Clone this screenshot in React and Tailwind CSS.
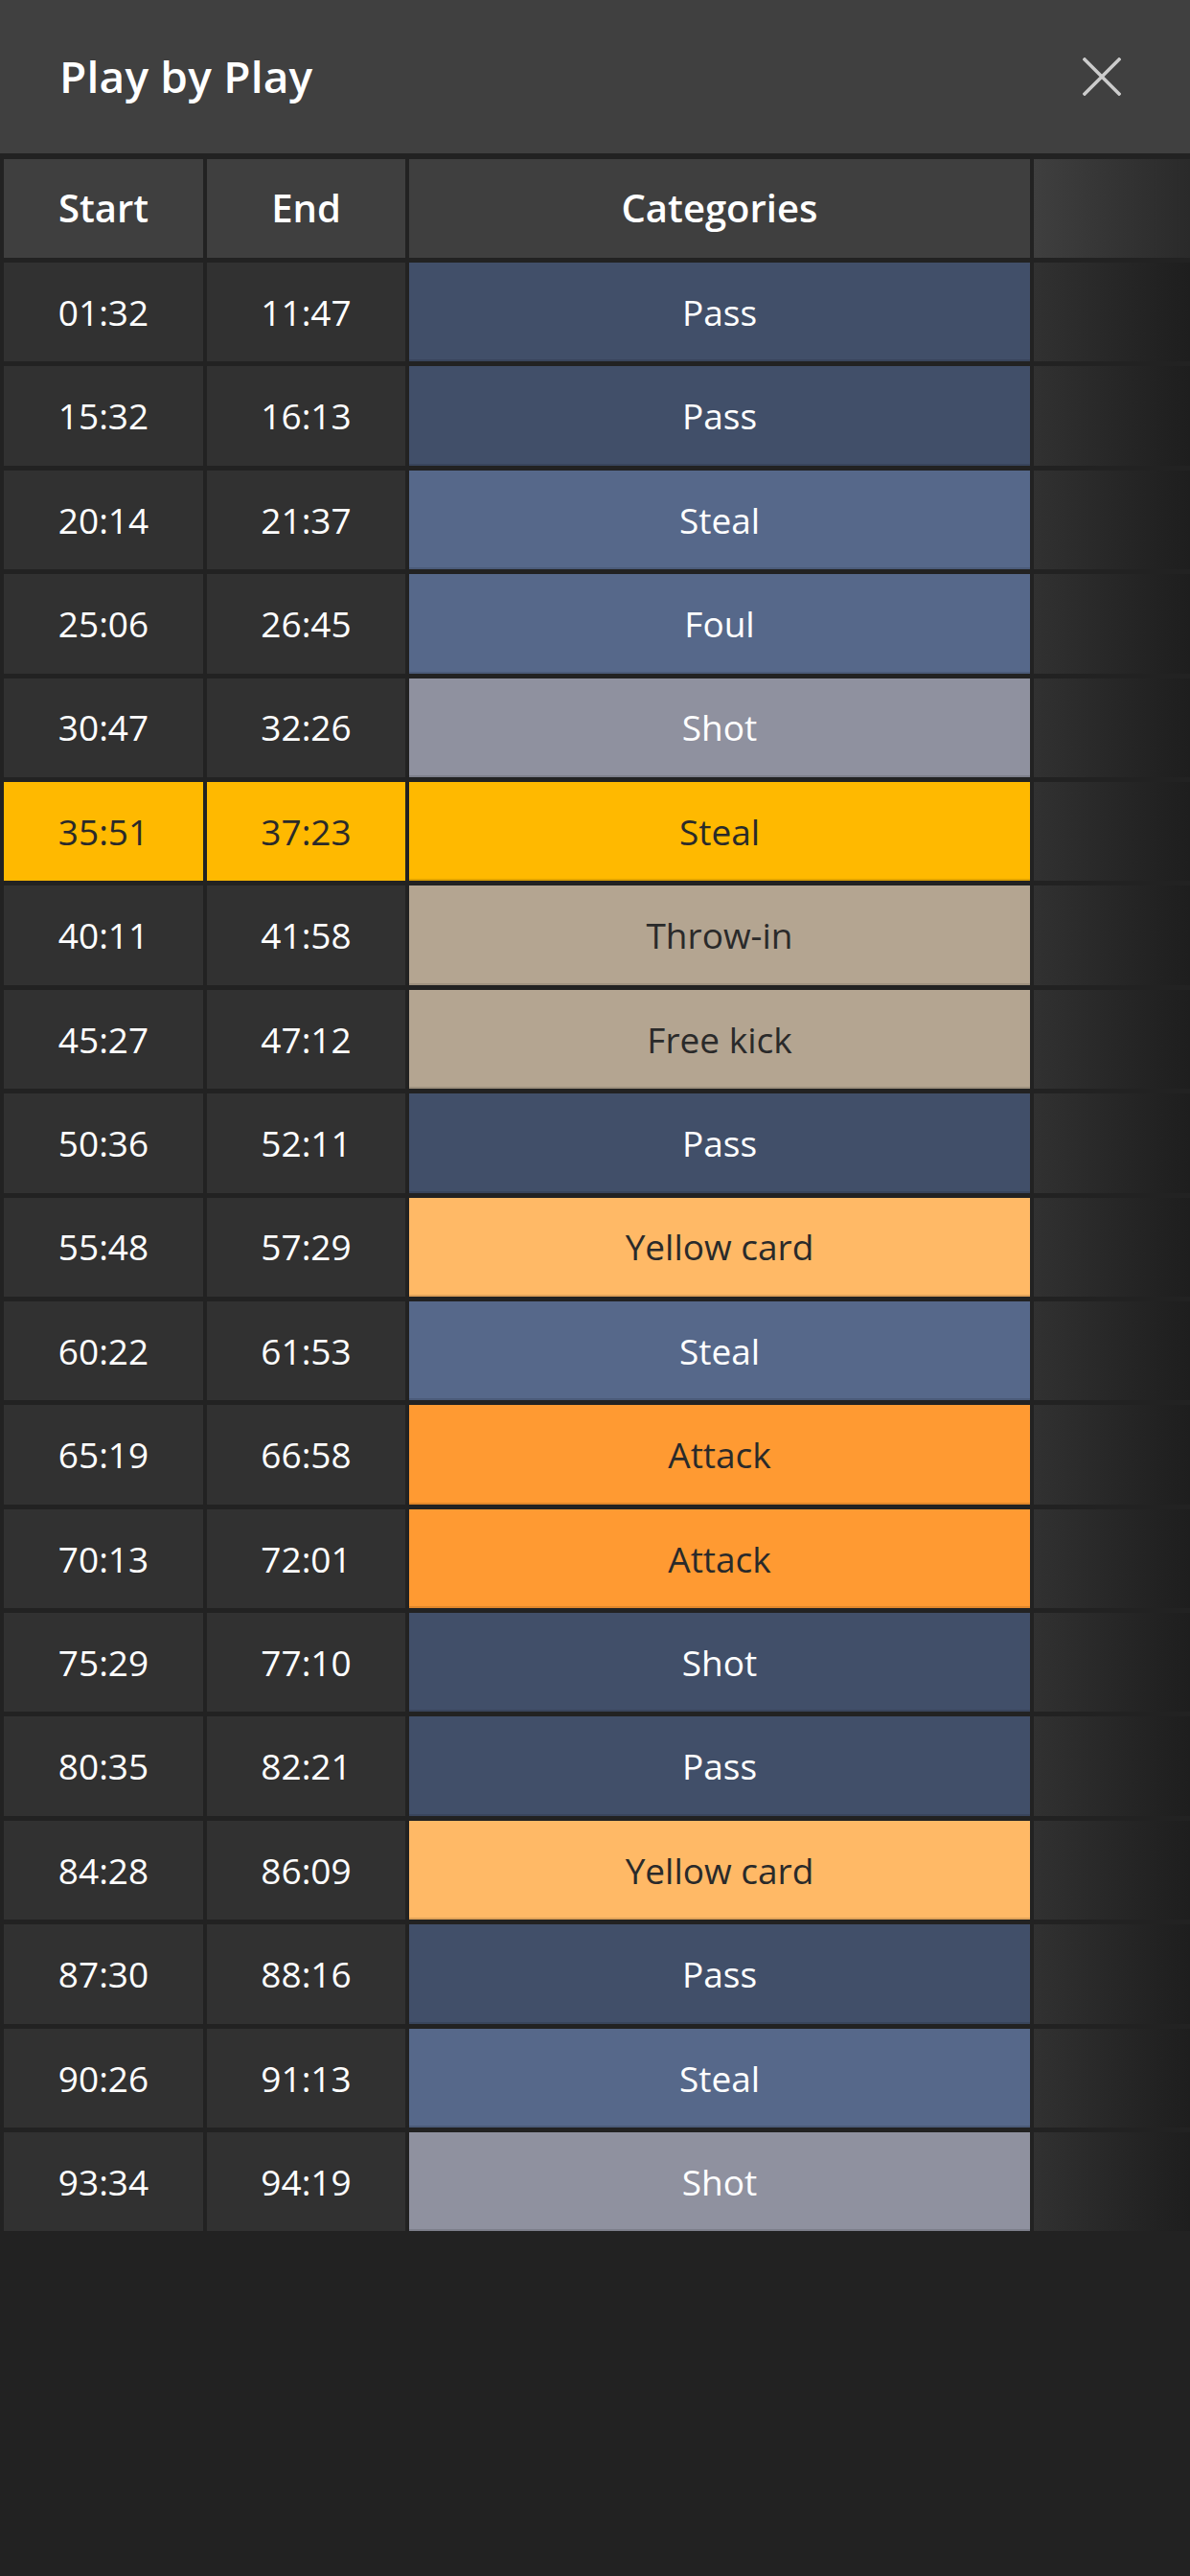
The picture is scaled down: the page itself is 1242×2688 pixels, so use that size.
import React from 'react';

// category colours
const CATS = {
    Pass: 'bg-[#414f69] text-white',
    Steal: 'bg-[#56688a] text-white',
    Foul: 'bg-[#56688a] text-white',
    Shot: 'bg-[#8f919f] text-white',
    'Throw-in': 'bg-[#b4a591] text-[#2a2a2a]',
    'Free kick': 'bg-[#b4a591] text-[#2a2a2a]',
    'Yellow card': 'bg-[#ffb966] text-[#2a2a2a]',
    Attack: 'bg-[#ff9a32] text-[#2a2a2a]',
};

const PLAYS = [
    { start: '01:32', end: '11:47', cat: 'Pass' },
    { start: '15:32', end: '16:13', cat: 'Pass' },
    { start: '20:14', end: '21:37', cat: 'Steal' },
    { start: '25:06', end: '26:45', cat: 'Foul' },
    { start: '30:47', end: '32:26', cat: 'Shot' },
    { start: '35:51', end: '37:23', cat: 'Steal', active: true },
    { start: '40:11', end: '41:58', cat: 'Throw-in' },
    { start: '45:27', end: '47:12', cat: 'Free kick' },
    { start: '50:36', end: '52:11', cat: 'Pass' },
    { start: '55:48', end: '57:29', cat: 'Yellow card' },
    { start: '60:22', end: '61:53', cat: 'Steal' },
    { start: '65:19', end: '66:58', cat: 'Attack' },
    { start: '70:13', end: '72:01', cat: 'Attack' },
    { start: '75:29', end: '77:10', cat: 'Shot', color: 'bg-[#414f69] text-white' },
    { start: '80:35', end: '82:21', cat: 'Pass' },
    { start: '84:28', end: '86:09', cat: 'Yellow card' },
    { start: '87:30', end: '88:16', cat: 'Pass' },
    { start: '90:26', end: '91:13', cat: 'Steal' },
    { start: '93:34', end: '94:19', cat: 'Shot' },
];

const cell = 'h-[103.4px] flex items-center justify-center text-[37px]';

const App = () => {
    return (
        <div className="min-h-[2688px] w-[1242px] bg-[#222222] font-['Open_Sans',sans-serif] overflow-hidden">
            {/* Header */}
            <div className="h-[160px] bg-[#404040] flex items-center justify-between pl-[62px] pr-[72px]">
                <h1 className="text-[46px] font-semibold text-white tracking-[0.2px] -mt-[2px]">Play by Play</h1>
                <button className="w-[40px] h-[40px] flex items-center justify-center">
                    <svg width="40" height="40" viewBox="0 0 40 40" fill="none" stroke="#cccccc" strokeWidth="3.5" strokeLinecap="square">
                        <path d="M2 2 L38 38 M38 2 L2 38" />
                    </svg>
                </button>
            </div>

            {/* Table */}
            <div className="pt-[5.6px] pl-[4px] grid grid-cols-[208px_207px_648px_1fr] gap-x-[4px] gap-y-[5px]">
                <div className={`${cell} bg-[#3f3f3f] text-white text-[40px] font-semibold`}>Start</div>
                <div className={`${cell} bg-[#3f3f3f] text-white text-[40px] font-semibold`}>End</div>
                <div className={`${cell} bg-[#3f3f3f] text-white text-[40px] font-semibold`}>Categories</div>
                <div className={`${cell} bg-gradient-to-r from-[#3f3f3f] to-[#2a2a2a]`} />

                {PLAYS.map((p, i) => (
                    <React.Fragment key={i}>
                        <div className={`${cell} ${p.active ? 'bg-[#ffb900] text-[#2a2a2a]' : 'bg-[#313131] text-white'}`}>{p.start}</div>
                        <div className={`${cell} ${p.active ? 'bg-[#ffb900] text-[#2a2a2a]' : 'bg-[#313131] text-white'}`}>{p.end}</div>
                        <div className={`${cell} shadow-[inset_0_-2px_0_rgba(0,0,0,0.12)] ${p.active ? 'bg-[#ffb900] text-[#2a2a2a]' : p.color || CATS[p.cat]}`}>{p.cat}</div>
                        <div className={`${cell} bg-gradient-to-r from-[#313131] to-[#1e1e1e]`} />
                    </React.Fragment>
                ))}
            </div>
        </div>
    );
};

export default App;
